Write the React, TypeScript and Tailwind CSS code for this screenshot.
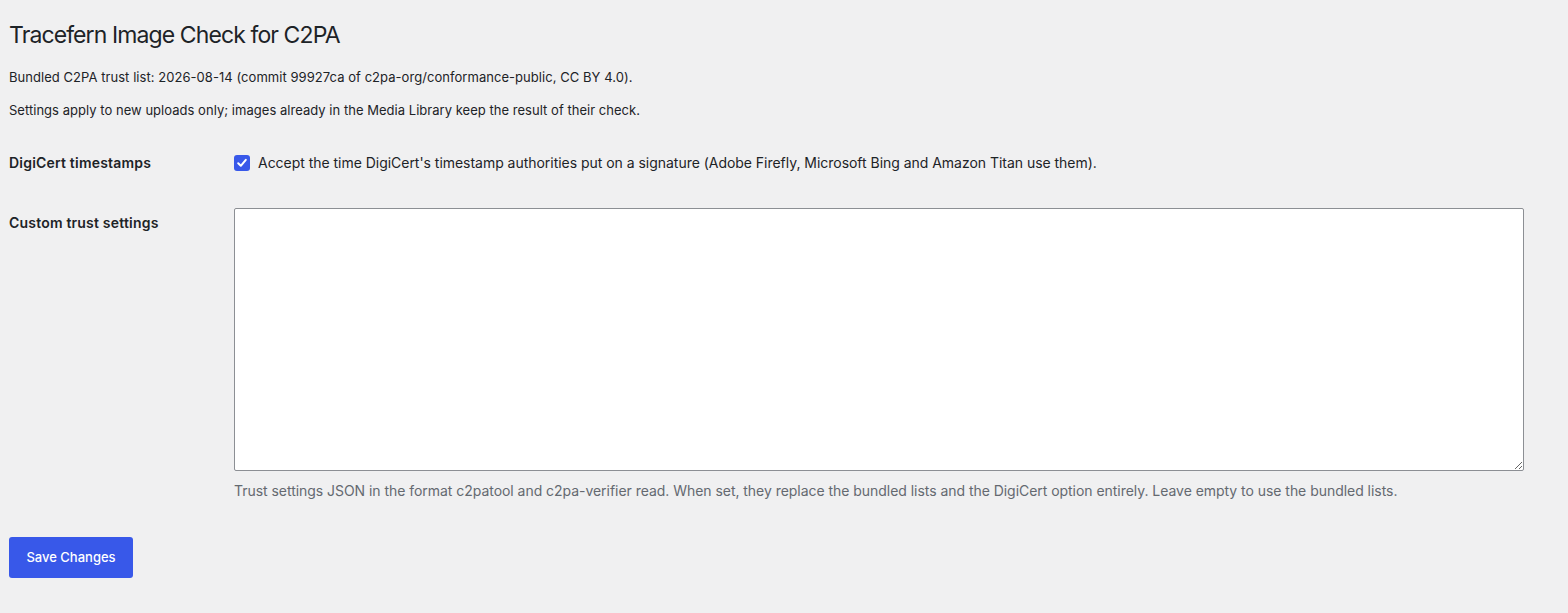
export default function App() {
  return (
    <div
      className="min-h-screen bg-[#f0f0f1] pl-[9px] pt-[20px] pb-[35px] text-[#1d2327]"
      style={{ fontFamily: 'Inter, "Noto Sans", "Liberation Sans", sans-serif' }}
    >
      <h1 className="text-[23px] leading-[30px] font-normal tracking-[-0.9px]">Tracefern Image Check for C2PA</h1>
      <p className="mt-[17px] text-[13px] leading-[20px] tracking-[0.05px]">
        Bundled C2PA trust list: 2026-08-14 (commit 99927ca of c2pa-org/conformance-public, CC BY 4.0).
      </p>
      <p className="mt-[13px] text-[13px] leading-[20px] tracking-[0.03px]">
        Settings apply to new uploads only; images already in the Media Library keep the result of their check.
      </p>

      <div className="mt-[34px] flex">
        <div className="w-[225px] shrink-0 text-[14px] leading-[18px] font-semibold tracking-[0.2px]">DigiCert timestamps</div>
        <label className="flex items-center gap-[8px] text-[14px] leading-[18px] tracking-[-0.03px]">
          <span className="flex h-[16px] w-[16px] items-center justify-center rounded-[3px] bg-[#3858e9]">
            <svg width="12" height="12" viewBox="0 0 12 12" fill="none">
              <path d="M2.2 6.3 L4.8 8.8 L9.8 2.8" stroke="white" strokeWidth="2" strokeLinecap="round" strokeLinejoin="round" />
            </svg>
          </span>
          <span>
            Accept the time DigiCert's timestamp authorities put on a signature (Adobe Firefly, Microsoft Bing and Amazon Titan use them).
          </span>
        </label>
      </div>

      <div className="mt-[36px] flex">
        <div className="w-[225px] shrink-0 pt-[6px] text-[14px] leading-[18px] font-semibold tracking-[0.2px]">Custom trust settings</div>
        <div>
          <textarea
            className="block h-[263px] w-[1290px] resize rounded-[2px] border border-[#8c8f94] bg-white"
            defaultValue=""
          />
          <p className="mt-[10px] text-[14px] leading-[20px] tracking-[-0.04px] text-[#646970]">
            Trust settings JSON in the format c2patool and c2pa-verifier read. When set, they replace the bundled lists and the DigiCert option entirely. Leave empty to use the bundled lists.
          </p>
        </div>
      </div>

      <button className="mt-[36px] h-[41px] w-[124px] rounded-[3px] bg-[#3858e9] text-[13px] font-medium text-white">
        Save Changes
      </button>
    </div>
  );
}
